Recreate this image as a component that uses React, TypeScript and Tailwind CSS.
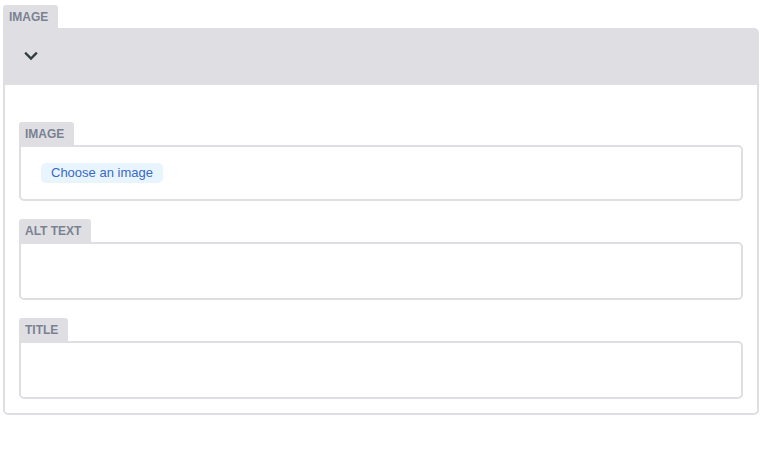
import React from "react";

function Label({ children }: { children: React.ReactNode }) {
  return (
    <div className="flex">
      <div className="bg-[#dfdfe3] text-[#7a8291] text-[12px] font-bold uppercase leading-[18px] pt-[3px] pb-[2px] pl-[6px] pr-[10px] rounded-t-[3px]">
        {children}
      </div>
    </div>
  );
}

function Field({ label }: { label: string }) {
  return (
    <div className="flex flex-col">
      <Label>{label}</Label>
      <div className="border-2 border-[#dfdfe3] rounded-[5px] rounded-tl-none h-[58px] bg-white" />
    </div>
  );
}

export default function App() {
  return (
    <div
      className="w-[773px] h-[456px] bg-white pl-[3px] pt-[5px]"
      style={{ fontFamily: '"Liberation Sans", Arial, sans-serif' }}
    >
      <div className="w-[756px] flex flex-col">
        <Label>Image</Label>
        <div className="border-2 border-[#dfdfe3] rounded-[5px] rounded-tl-none flex flex-col">
          <div className="bg-[#dfdfe3] h-[55px] flex items-center pl-[20px]">
            <svg width="14" height="14" viewBox="0 0 14 14" className="block mb-[3px] -ml-[1px]">
              <path d="M2 4.5 L7 9.5 L12 4.5" fill="none" stroke="#313d3e" strokeWidth="2.4" strokeLinecap="square" />
            </svg>
          </div>
          <div className="px-[14px] pb-[14px] pt-[37px] flex flex-col gap-[18px]">
            <div className="flex flex-col">
              <Label>Image</Label>
              <div className="border-2 border-[#dfdfe3] rounded-[5px] rounded-tl-none h-[56px] px-[20px] flex items-center bg-white">
                <button className="bg-[#e8f5fe] text-[#3a69c7] text-[13px] leading-[20px] h-[20px] px-[10px] rounded-[5px]">
                  Choose an image
                </button>
              </div>
            </div>
            <Field label="Alt Text" />
            <Field label="Title" />
          </div>
        </div>
      </div>
    </div>
  );
}
